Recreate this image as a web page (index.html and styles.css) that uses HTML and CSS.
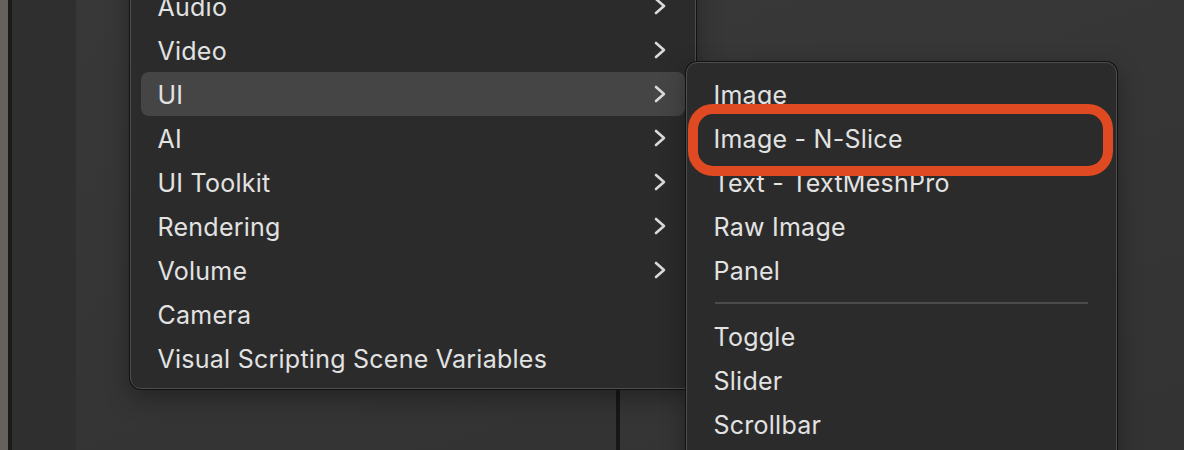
FILE: index.html
```html
<!DOCTYPE html>
<html>
<head>
<meta charset="utf-8">
<link rel="stylesheet" href="styles.css">
</head>
<body>
<div class="desk">
  <div class="strip-a"></div>
  <div class="strip-b"></div>
  <div class="side"></div>
  <div class="area area-left"></div>
  <div class="divider"></div>
  <div class="area area-right"></div>
</div>

<div class="menu main-menu">
  <div class="item"><span>Audio</span><svg class="chev" viewBox="0 0 12 18"><polyline points="2,2 10,9 2,16"/></svg></div>
  <div class="item"><span>Video</span><svg class="chev" viewBox="0 0 12 18"><polyline points="2,2 10,9 2,16"/></svg></div>
  <div class="item active"><span>UI</span><svg class="chev" viewBox="0 0 12 18"><polyline points="2,2 10,9 2,16"/></svg></div>
  <div class="item"><span>AI</span><svg class="chev" viewBox="0 0 12 18"><polyline points="2,2 10,9 2,16"/></svg></div>
  <div class="item"><span>UI Toolkit</span><svg class="chev" viewBox="0 0 12 18"><polyline points="2,2 10,9 2,16"/></svg></div>
  <div class="item"><span>Rendering</span><svg class="chev" viewBox="0 0 12 18"><polyline points="2,2 10,9 2,16"/></svg></div>
  <div class="item"><span>Volume</span><svg class="chev" viewBox="0 0 12 18"><polyline points="2,2 10,9 2,16"/></svg></div>
  <div class="item"><span>Camera</span></div>
  <div class="item"><span>Visual Scripting Scene Variables</span></div>
</div>

<div class="menu sub-menu">
  <div class="item"><span>Image</span></div>
  <div class="item"><span>Image - N-Slice</span></div>
  <div class="item"><span>Text - TextMeshPro</span></div>
  <div class="item"><span>Raw Image</span></div>
  <div class="item"><span>Panel</span></div>
  <div class="sep"></div>
  <div class="item"><span>Toggle</span></div>
  <div class="item"><span>Slider</span></div>
  <div class="item"><span>Scrollbar</span></div>
</div>

<div class="callout"></div>
</body>
</html>
```

FILE: styles.css
```css
html, body {
  margin: 0;
  padding: 0;
  width: 1184px;
  height: 450px;
  overflow: hidden;
  background: #353535;
  font-family: Inter, "Liberation Sans", sans-serif;
}

.desk {
  display: flex;
  width: 1184px;
  height: 450px;
}

.strip-a {
  width: 8px;
  background: #65625e;
}

.strip-b {
  width: 4px;
  background: #1b1b1b;
}

.side {
  width: 64px;
  background: #2f2f2f;
}

.area {
  background: linear-gradient(160deg, #383838 0%, #333333 100%);
}

.area-left {
  width: 540px;
}

.divider {
  width: 4px;
  background: #171717;
}

.area-right {
  flex: 1;
}

.menu {
  position: absolute;
  box-sizing: border-box;
  background: #2b2b2b;
  border: 1.5px solid #4e4e4e;
  border-radius: 11px;
  box-shadow: 0 0 0 1px #121212, 0 8px 24px rgba(0, 0, 0, 0.35);
  padding: 0 10px;
  display: flex;
  flex-direction: column;
}

.main-menu {
  left: 130px;
  top: -30px;
  width: 566px;
  height: 419px;
  padding-top: 12.5px;
}

.sub-menu {
  left: 686px;
  top: 62px;
  width: 431px;
  height: 420px;
  padding-top: 8.5px;
}

.item {
  box-sizing: border-box;
  height: 44px;
  flex: 0 0 44px;
  display: flex;
  align-items: center;
  justify-content: space-between;
  padding: 2px 19px 0 16.5px;
  border-radius: 8px;
  color: #e2e2e2;
  font-size: 25px;
  letter-spacing: 0.25px;
}

.item.active {
  background: #454545;
}

.chev {
  width: 12px;
  height: 18px;
  margin-top: -2px;
  fill: none;
  stroke: #dadada;
  stroke-width: 2.6;
  stroke-linecap: round;
  stroke-linejoin: round;
}

.sep {
  flex: 0 0 22px;
  display: flex;
  align-items: center;
  padding: 0 18px;
}

.sep::before {
  content: "";
  flex: 1;
  height: 2px;
  background: #4b4b4b;
}

.callout {
  position: absolute;
  left: 688px;
  top: 104px;
  width: 425px;
  height: 72px;
  box-sizing: border-box;
  border: 10px solid #e04a22;
  border-radius: 25px;
}
```
